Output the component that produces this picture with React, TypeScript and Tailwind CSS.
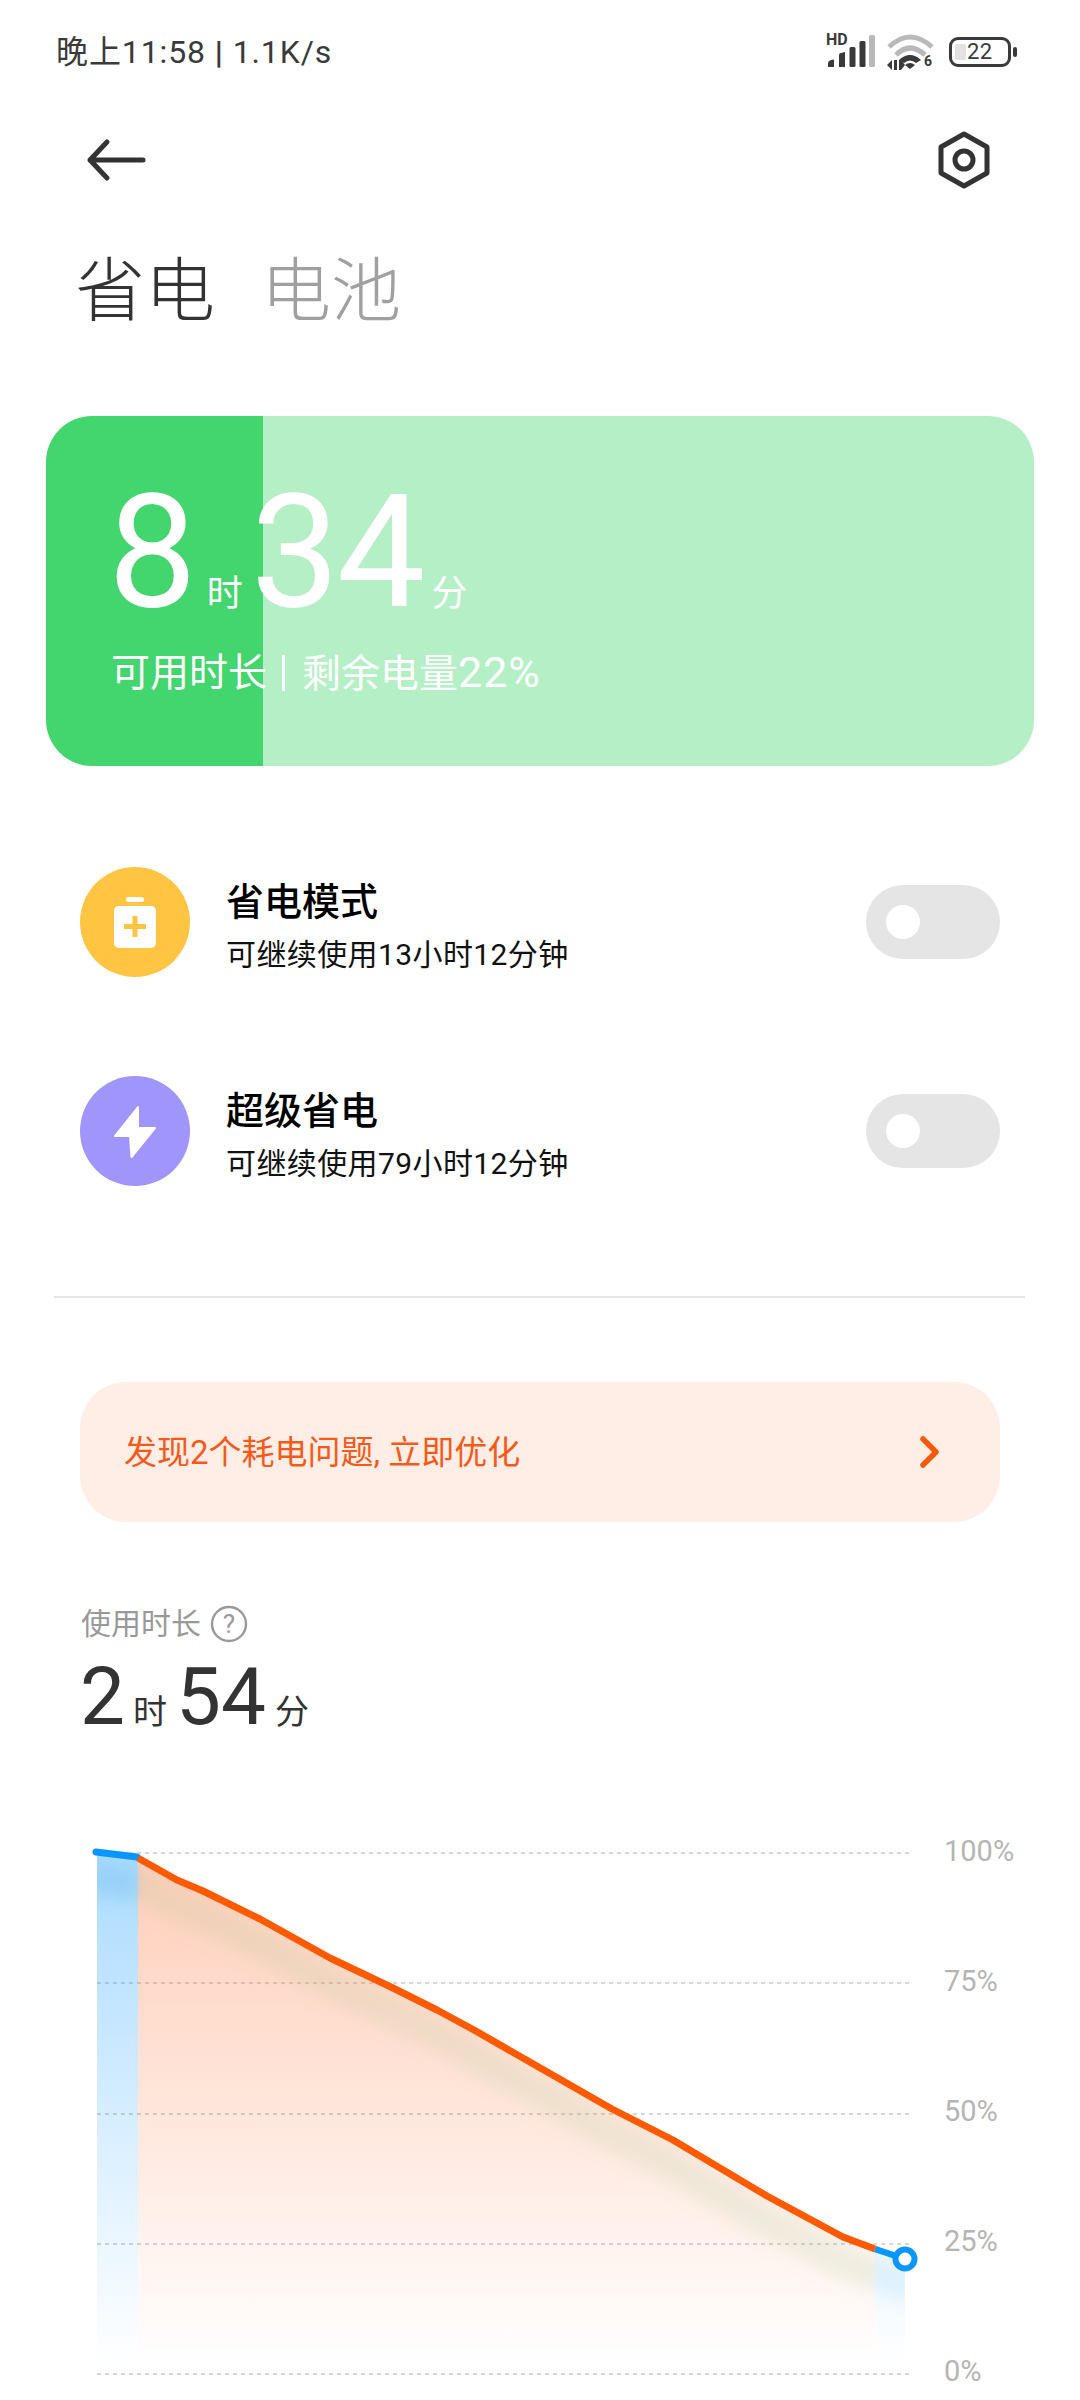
const curve = "M138 1857 L177 1879 L203 1890 L260 1918 L330 1957 L393 1987 L437 2009 L474 2029 L612 2108 L673 2139 L767 2195 L843 2236 L875 2248";
const area = "M97 1851 L138 1857 L177 1879 L203 1890 L260 1918 L330 1957 L393 1987 L437 2009 L474 2029 L612 2108 L673 2139 L767 2195 L843 2236 L875 2248 L905 2258 L905 2373 L97 2373 Z";

function Signal() {
  return (
    <div className="relative w-[50px] h-[36px]">
      <span className="absolute left-0 top-[-3px] text-[16px] leading-[18px] font-bold text-[#3a3a3a]">HD</span>
      <svg width="50" height="36" viewBox="0 0 50 36" className="absolute left-0 top-0">
        <path d="M2 33 V29 Q2 27 5 26 L8 25.5 V33 Z" fill="#3a3a3a" />
        <path d="M13 33 V21 Q13 19 15 19 L19 18 V33 Z" fill="#3a3a3a" />
        <rect x="23.5" y="13" width="6" height="20" rx="1.5" fill="#3a3a3a" />
        <rect x="33.5" y="7" width="6" height="26" rx="1.5" fill="#3a3a3a" />
        <rect x="43" y="1" width="6" height="32" rx="1.5" fill="#b9b9b9" />
      </svg>
    </div>
  );
}

function Wifi() {
  return (
    <div className="relative w-[48px] h-[36px] ml-[11px]">
      <svg width="48" height="36" viewBox="0 0 48 36" className="absolute left-0 top-0">
        <path d="M2 13 Q23 -7 45 13" fill="none" stroke="#b9b9b9" strokeWidth="5" />
        <path d="M9 21 Q23 7 38 21" fill="none" stroke="#b9b9b9" strokeWidth="5" />
        <path d="M12 26 Q23 16 34 26 L29 29 Q23 24 17 29 Z" fill="#3a3a3a" />
        <path d="M18 31 Q23 27 28 31 L23 35 Z" fill="#3a3a3a" />
        <path d="M0 31 L5 26 V36 Z M7 26 H10 V36 H7 Z M12 26 H14 V36 H12 Z M14 26 L18 31 L14 36 Z" fill="#3a3a3a" />
      </svg>
      <span className="absolute left-[37px] top-[19px] text-[14px] leading-[16px] font-bold text-[#3a3a3a]">6</span>
    </div>
  );
}

function Battery() {
  return (
    <div className="flex items-center ml-[14px]">
      <div className="w-[62px] h-[30px] rounded-[9px] border-[3.5px] border-[#3a3a3a] flex items-center pl-[3px]">
        <div className="w-[11px] h-[16px] rounded-[2px] bg-[#e2e2e2]" />
        <span className="ml-[1px] text-[22px] leading-[22px] tracking-[0.5px] text-[#3a3a3a]">22</span>
      </div>
      <div className="ml-[2px] w-[4px] h-[10px] rounded-[2px] bg-[#3a3a3a]" />
    </div>
  );
}

function Toggle() {
  return (
    <div className="w-[134px] h-[74px] rounded-[37px] bg-[#e5e5e5] flex items-center pl-[20px]">
      <div className="w-[34px] h-[34px] rounded-full bg-white" />
    </div>
  );
}

function Row(props: { color: string; title: string; sub: string; icon: React.ReactNode; className?: string }) {
  return (
    <div className={"flex items-center pl-[80px] pr-[80px] h-[110px] " + (props.className ?? "")}>
      <div className={"w-[110px] h-[110px] rounded-full " + props.color}>{props.icon}</div>
      <div className="ml-[36px] flex-1">
        <div className="text-[38px] leading-[48px] font-medium text-black mt-[8px]">{props.title}</div>
        <div className="text-[30px] leading-[40px] tracking-[0.4px] text-[#111] mt-[9px]">{props.sub}</div>
      </div>
      <Toggle />
    </div>
  );
}

export default function App() {
  return (
    <div className="w-[1080px] h-[2400px] overflow-hidden bg-white font-['Roboto','Noto_Sans_CJK_SC',sans-serif]">
      <div className="h-[104px] flex items-center justify-between pl-[56px] pr-[63px]">
        <span className="text-[32px] leading-[40px] tracking-[0.9px] text-[#3a3a3a]">晚上11:58 <span className="font-bold">|</span> 1.1K/s</span>
        <div className="flex items-center">
          <Signal />
          <Wifi />
          <Battery />
        </div>
      </div>

      <div className="h-[112px] flex items-center justify-between pl-[86px] pr-[88px]">
        <svg width="60" height="44" viewBox="0 0 60 44" fill="none" stroke="#333" strokeWidth="5" strokeLinecap="round" strokeLinejoin="round">
          <path d="M4 22 H57 M21 4 L4 22 L21 40" />
        </svg>
        <svg width="56" height="60" viewBox="0 0 56 60" fill="none" stroke="#333" strokeWidth="5" strokeLinejoin="round">
          <path d="M28 4 L51 17 V43 L28 56 L5 43 V17 Z" />
          <circle cx="28" cy="30" r="9" />
        </svg>
      </div>

      <div className="h-[148px] pt-[3px] flex items-center pl-[75px] text-[70px] leading-[148px] font-light">
        <span className="text-[#333]">省电</span>
        <span className="ml-[46px] text-[#a0a0a0]">电池</span>
      </div>

      <div className="mt-[52px] ml-[46px] w-[988px] h-[350px] rounded-[46px] bg-[linear-gradient(90deg,#43d56e_217px,#b5efc6_217px)] text-white pt-[56px] pl-[62px]">
        <div className="flex items-baseline h-[160px]">
          <span className="text-[158px] leading-[160px]">8</span>
          <span className="text-[36px] leading-[40px] ml-[10px]">时</span>
          <span className="text-[158px] leading-[160px] ml-[8px] tracking-[-3px]">34</span>
          <span className="text-[36px] leading-[40px] ml-[9px]">分</span>
        </div>
        <div className="h-[80px] pt-[2px] flex items-center pl-[3px] text-[39px] leading-[48px]">
          <span>可用时长</span>
          <span className="ml-[15px] w-[3px] h-[36px] bg-white" />
          <span className="ml-[17px]">剩余电量<span className="text-[43px] tracking-[1px]">22%</span></span>
        </div>
      </div>

      <Row
        className="mt-[101px]"
        color="bg-[#ffc542]"
        title="省电模式"
        sub="可继续使用13小时12分钟"
        icon={
          <svg width="110" height="110" viewBox="0 0 110 110">
            <rect x="46" y="30" width="18" height="5" rx="2.5" fill="#fff" />
            <rect x="34" y="39" width="42" height="42" rx="5" fill="#fff" />
            <path d="M55 49 V70 M44 59.5 H66" stroke="#ffc542" strokeWidth="5" fill="none" />
          </svg>
        }
      />
      <Row
        className="mt-[99px]"
        color="bg-[#9f95fb]"
        title="超级省电"
        sub="可继续使用79小时12分钟"
        icon={
          <svg width="110" height="110" viewBox="0 0 110 110">
            <path d="M58 31 L35 60 H50 L51.5 81 L75 52 H58 Z" fill="#fff" stroke="#fff" strokeWidth="2" strokeLinejoin="round" />
          </svg>
        }
      />

      <div className="mt-[110px] ml-[54px] w-[971px] h-[2px] bg-[#e5e5e5]" />

      <div className="mt-[84px] ml-[80px] w-[920px] h-[140px] rounded-[46px] bg-[#ffeee6] flex items-center justify-between pl-[44px] pr-[58px]">
        <span className="mt-[2px] text-[33px] leading-[44px] text-[#f55a1a]">发现2个耗电问题, 立即优化</span>
        <svg width="24" height="36" viewBox="0 0 24 36" fill="none" stroke="#f55a0a" strokeWidth="5.5" strokeLinecap="round" strokeLinejoin="round">
          <path d="M5 5 L18 18 L5 31" />
        </svg>
      </div>

      <div className="mt-[82px] ml-[81px] h-[40px] flex items-center text-[30px] leading-[40px] text-[#999]">
        <span>使用时长</span>
        <svg className="ml-[9px]" width="38" height="38" viewBox="0 0 38 38">
          <circle cx="19" cy="19" r="17" fill="none" stroke="#999" strokeWidth="2.4" />
          <text x="19" y="28" textAnchor="middle" fontSize="26" fill="#999">?</text>
        </svg>
      </div>

      <div className="mt-[8px] ml-[80px] h-[90px] flex items-baseline text-[#333]">
        <span className="text-[80px] leading-[90px]">2</span>
        <span className="text-[34px] leading-[40px] ml-[8px]">时</span>
        <span className="text-[80px] leading-[90px] ml-[9px]">54</span>
        <span className="text-[34px] leading-[40px] ml-[9px]">分</span>
      </div>

      <div className="mt-[89px] flex pl-[90px]">
        <svg width="835" height="570" viewBox="90 1830 835 570" fill="none">
          <defs>
            <linearGradient id="o" gradientUnits="userSpaceOnUse" x1="0" y1="1855" x2="0" y2="2365">
              <stop offset="0" stopColor="#ff5a14" stopOpacity="0.3" />
              <stop offset="1" stopColor="#ff5a14" stopOpacity="0" />
            </linearGradient>
            <linearGradient id="b" gradientUnits="userSpaceOnUse" x1="0" y1="1855" x2="0" y2="2365">
              <stop offset="0" stopColor="#0a96ff" stopOpacity="0.34" />
              <stop offset="1" stopColor="#0a96ff" stopOpacity="0" />
            </linearGradient>
            <clipPath id="c"><path d={area} /></clipPath>
            <filter id="s" filterUnits="userSpaceOnUse" x="60" y="1800" width="900" height="600"><feGaussianBlur stdDeviation="8" /></filter>
          </defs>
          {[1852, 1982, 2113, 2243, 2373].map((y) => (
            <line key={y} x1="97" x2="913" y1={y} y2={y} stroke="#b0b0b0" strokeWidth="1.2" strokeDasharray="4 4" />
          ))}
          <g clipPath="url(#c)">
            <rect x="97" y="1840" width="41" height="530" fill="url(#b)" />
            <rect x="138" y="1840" width="737" height="530" fill="url(#o)" />
            <rect x="875" y="1840" width="30" height="530" fill="url(#b)" />
            <path d={curve} transform="translate(0 26)" stroke="#a8c88c" strokeOpacity="0.17" strokeWidth="32" filter="url(#s)" />
            <path d="M90 1851 L138 1857" transform="translate(0 26)" stroke="#2a9de0" strokeOpacity="0.18" strokeWidth="32" filter="url(#s)" />
            <path d="M875 2248 L915 2262" transform="translate(0 26)" stroke="#2a9de0" strokeOpacity="0.08" strokeWidth="32" filter="url(#s)" />
          </g>
          <path d="M96 1851 L137 1856" stroke="#0a96ff" strokeWidth="7" strokeLinecap="round" />
          <path d="M875 2248 L905 2258" stroke="#0a96ff" strokeWidth="6.5" />
          <path d={curve} stroke="#ff5a00" strokeWidth="7" strokeLinejoin="round" />
          <circle cx="905" cy="2258" r="9.5" fill="#fff" stroke="#0a96ff" strokeWidth="6" />
        </svg>
        <div className="ml-[19px] flex flex-col gap-[90px] text-[29px] leading-[40px] text-[#b5b5b5]">
          <span>100%</span>
          <span>75%</span>
          <span>50%</span>
          <span>25%</span>
          <span>0%</span>
        </div>
      </div>
    </div>
  );
}
